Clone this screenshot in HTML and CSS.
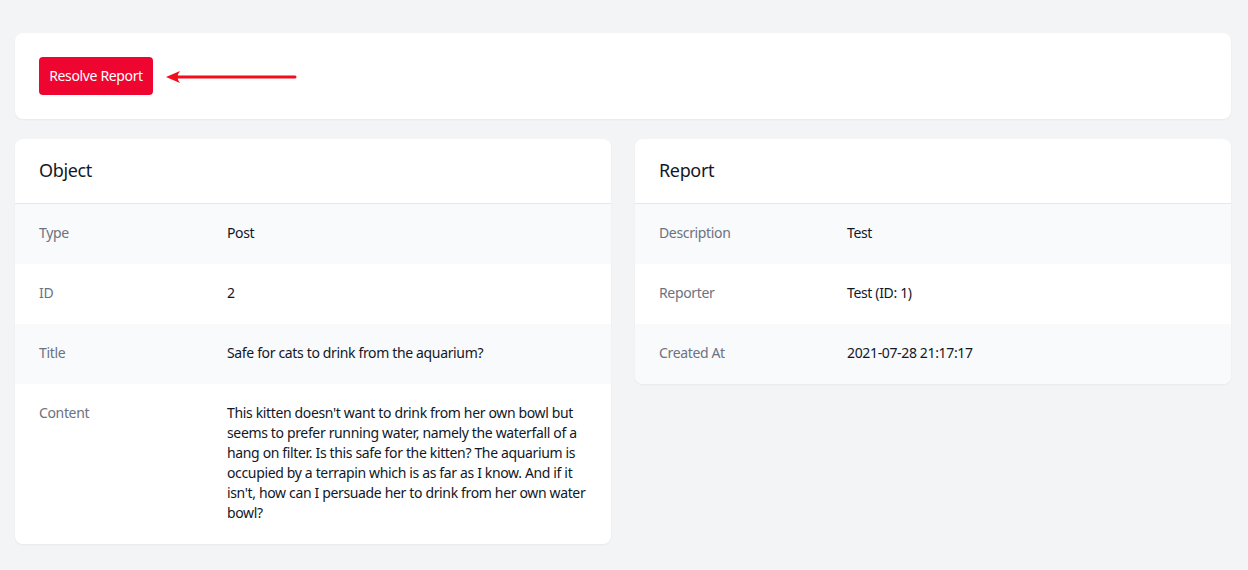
FILE: index.html
```html
<!DOCTYPE html>
<html lang="en">
<head>
<meta charset="utf-8">
<title>Report</title>
<link rel="stylesheet" href="styles.css">
</head>
<body>
<main class="page">
  <section class="card toolbar">
    <button class="btn-resolve" type="button">Resolve Report</button>
    <svg class="arrow" width="132" height="16" viewBox="0 0 132 16" aria-hidden="true">
      <line x1="10" y1="8" x2="129" y2="8" stroke="#f20d1b" stroke-width="3" stroke-linecap="round"/>
      <path d="M0 8 L14 2 Q9 8 14 14 Z" fill="#f20d1b"/>
    </svg>
  </section>
  <div class="columns">
    <section class="card panel">
      <h2 class="panel-title">Object</h2>
      <dl class="list">
        <div class="row"><dt>Type</dt><dd>Post</dd></div>
        <div class="row"><dt>ID</dt><dd>2</dd></div>
        <div class="row"><dt>Title</dt><dd>Safe for cats to drink from the aquarium?</dd></div>
        <div class="row"><dt>Content</dt><dd>This kitten doesn't want to drink from her own bowl but seems to prefer running water, namely the waterfall of a hang on filter. Is this safe for the kitten? The aquarium is occupied by a terrapin which is as far as I know. And if it isn't, how can I persuade her to drink from her own water bowl?</dd></div>
      </dl>
    </section>
    <section class="card panel">
      <h2 class="panel-title">Report</h2>
      <dl class="list">
        <div class="row"><dt>Description</dt><dd>Test</dd></div>
        <div class="row"><dt>Reporter</dt><dd>Test (ID: 1)</dd></div>
        <div class="row"><dt>Created At</dt><dd>2021-07-28 21:17:17</dd></div>
      </dl>
    </section>
  </div>
</main>
</body>
</html>
```
FILE: styles.css
```css
* { box-sizing: border-box; }
html, body { margin: 0; padding: 0; }
body {
  background: #f3f4f6;
  font-family: "Noto Sans", "Open Sans", sans-serif;
  color: #111827;
  letter-spacing: -0.35px;
}
.page {
  padding: 33px 17px 20px 15px;
  display: flex;
  flex-direction: column;
  gap: 20px;
}
.card {
  background: #fff;
  border-radius: 8px;
  box-shadow: 0 1px 2px rgba(0,0,0,0.05);
}
.toolbar {
  padding: 24px;
  display: flex;
  align-items: center;
  gap: 13px;
}
.btn-resolve {
  height: 38px;
  padding: 0 9px;
  min-width: 114px;
  white-space: nowrap;
  border: none;
  border-radius: 4px;
  background: #ee0530;
  color: #fff;
  font-family: inherit;
  letter-spacing: inherit;
  font-size: 14px;
  line-height: 20px;
  cursor: pointer;
}
.arrow { display: block; margin-top: 2px; }
.columns {
  display: grid;
  grid-template-columns: 1fr 1fr;
  gap: 24px;
  align-items: start;
}
.panel { overflow: hidden; }
.panel-title {
  margin: 0;
  padding: 19px 24px 21px;
  font-size: 18px;
  line-height: 24px;
  font-weight: 400;
  color: #111827;
  border-bottom: 1px solid #e5e7eb;
}
.list { margin: 0; }
.row {
  display: grid;
  grid-template-columns: repeat(3, 1fr);
  gap: 16px;
  padding: 19px 24px 21px;
  font-size: 14px;
  line-height: 20px;
}
.row:nth-child(odd) { background: #f9fafb; }
.row dt { color: #6b7280; }
.row dd { margin: 0; grid-column: span 2; color: #111827; }
```
